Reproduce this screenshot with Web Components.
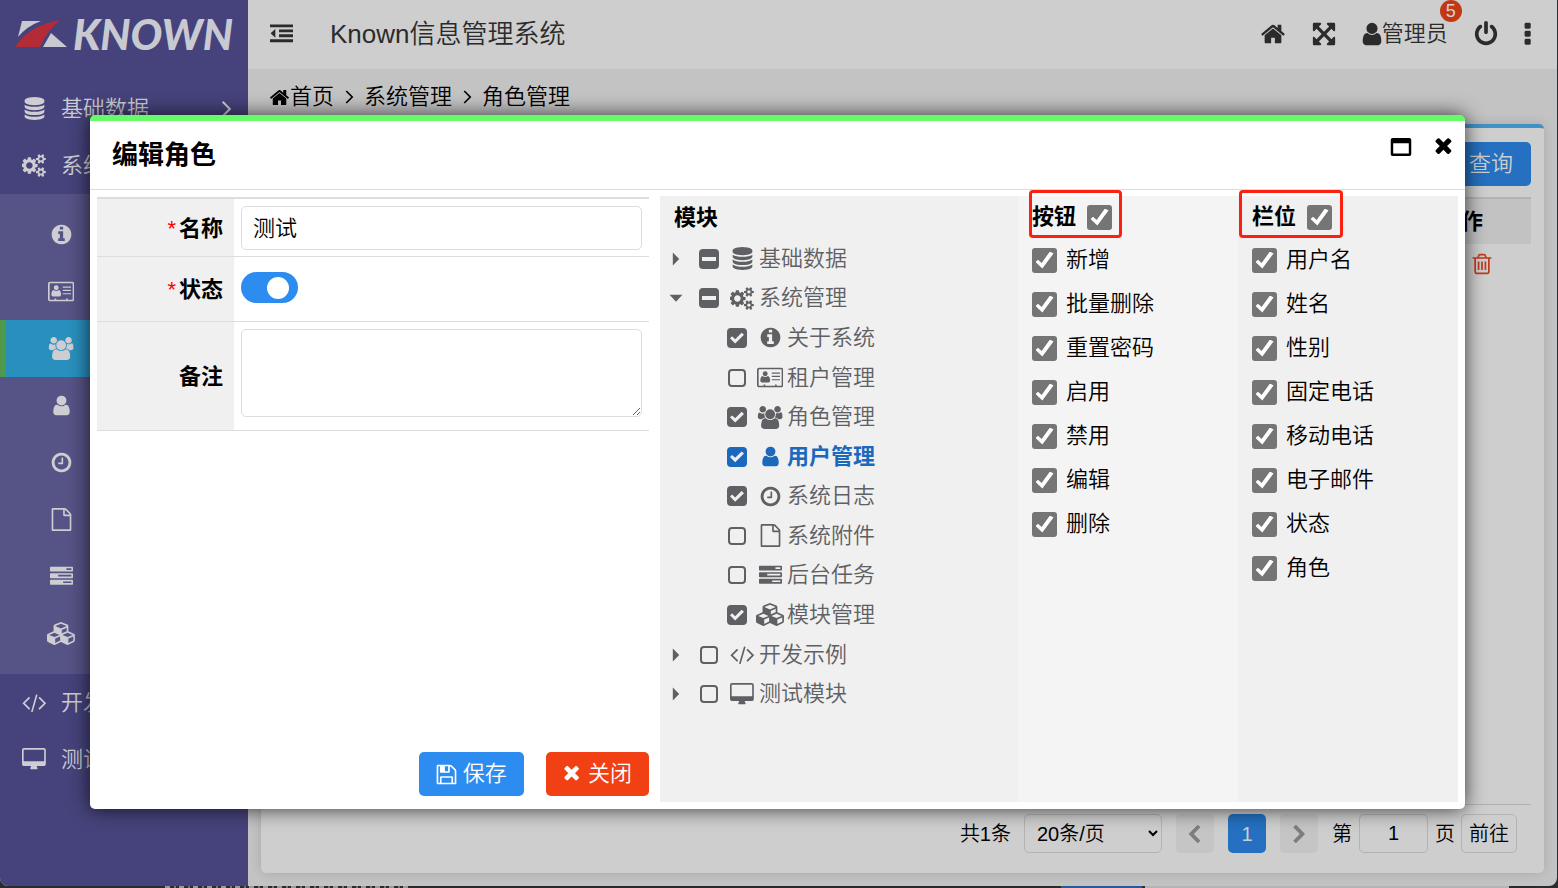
<!DOCTYPE html>
<html lang="zh-CN">
<head>
<meta charset="utf-8">
<title>Known信息管理系统</title>
<style>
html,body{margin:0;height:100%}
body{background:#2a2b2c;font:350 22px/32px "Liberation Sans","Noto Sans CJK SC",sans-serif;color:#000;overflow:hidden}
</style>
</head>
<body>
<k-app>
  <k-sidebar slot="side"></k-sidebar>
  <k-header slot="top"></k-header>
  <k-breadcrumb slot="path"></k-breadcrumb>
  <k-list slot="page"></k-list>
  <k-dialog slot="dialog" heading="编辑角色">
    <k-role-form slot="form"></k-role-form>
    <k-permissions slot="side"></k-permissions>
  </k-dialog>
</k-app>
<script>
const circle='q0 209-103 385.5t-279.5 279.5-385.5 103-385.5-103-279.5-279.5-103-385.5 103-385.5 279.5-279.5 385.5-103 385.5 103 279.5 279.5 103 385.5z';
const smallGear='v140q0 16-149 31-12 27-30 52 51 113 51 138 0 4-4 7-122 71-124 71-8 0-46-47t-52-68q-20 2-30 2t-30-2q-14 21-52 68t-46 47q-2 0-124-71-4-3-4-7 0-25 51-138-18-25-30-52-149-15-149-31v-140q0-16 149-31 13-29 30-52-51-113-51-138 0-4 4-7 4-2 35-20t59-34 30-16q8 0 46 46.5t52 67.5q20-2 30-2t30 2q51-71 92-112l6-2q4 0 124 70 4 3 4 7 0 25-51 138 17 23 30 52 149 15 149 31z';
const disc='v170q0 69-103 128t-280 93.5-385 34.5-385-34.5-280-93.5-103-128v-170q119 84 325 127t443 43z';
const bar='v256q0 26-19 45t-45 19h-1664q-26 0-45-19t-19-45v-256q0-26 19-45t45-19h1664q26 0 45 19t19 45z';
const slat='v576q0 14-9 23t-23 9h-64q-14 0-23-9t-9-23v-576q0-14 9-23t23-9h64q14 0 23 9t9 23z';
const p=d=>`<path d="${d}"/>`;
const ICONS={
home:[1792,p('M1472 992v480q0 26-19 45t-45 19h-384v-384h-256v384h-384q-26 0-45-19t-19-45v-480q0-1 .5-3t.5-3l575-474 575 474q1 2 1 6zm223-69l-62 74q-8 9-21 11h-3q-13 0-21-7l-692-577-692 577q-12 8-24 7-13-2-21-11l-62-74q-8-10-7-23.5t11-21.5l719-599q32-26 76-26t76 26l244 204v-195q0-14 9-23t23-9h192q14 0 23 9t9 23v408l219 182q10 8 11 21.5t-7 23.5z')],
database:[1792,p('M896 768q237 0 443-43t325-127'+disc)+p('M896 1536q237 0 443-43t325-127'+disc)+p('M896 1152q237 0 443-43t325-127'+disc)+p('M896 0q208 0 385 34.5t280 93.5 103 128v128q0 69-103 128t-280 93.5-385 34.5-385-34.5-280-93.5-103-128v-128q0-69 103-128t280-93.5 385-34.5z')],
cogs:[1856,p('M832 896q0-106-75-181t-181-75-181 75-75 181 75 181 181 75 181-75 75-181zm768 512q0-52-38-90t-90-38-90 38-38 90q0 53 37.5 90.5t90.5 37.5 90.5-37.5 37.5-90.5zm0-1024q0-52-38-90t-90-38-90 38-38 90q0 53 37.5 90.5t90.5 37.5 90.5-37.5 37.5-90.5zm-384 421v185q0 10-7 19.5t-16 10.5l-155 24q-11 35-32 76 34 48 90 115 7 11 7 20 0 12-7 19-23 30-82.5 89.5t-78.5 59.5q-11 0-21-7l-115-90q-37 19-77 31-11 108-23 155-7 24-30 24h-186q-11 0-20-7.5t-10-17.5l-23-153q-34-10-75-31l-118 89q-7 7-20 7-11 0-21-8-144-133-144-160 0-9 7-19 10-14 41-53t47-61q-23-44-35-82l-152-24q-10-1-17-9.5t-7-19.5v-185q0-10 7-19.5t16-10.5l155-24q11-35 32-76-34-48-90-115-7-11-7-20 0-12 7-20 22-30 82-89t79-59q11 0 21 7l115 90q34-18 77-32 11-108 23-154 7-24 30-24h186q11 0 20 7.5t10 17.5l23 153q34 10 75 31l118-89q8-7 20-7 11 0 21 8 144 133 144 160 0 8-7 19-12 16-42 54t-45 60q23 48 34 82l152 23q10 2 17 10.5t7 19.5zm640 533'+smallGear+'m0-1024'+smallGear)],
info:[1792,p('M1152 1376v-160q0-14-9-23t-23-9h-96v-512q0-14-9-23t-23-9h-320q-14 0-23 9t-9 23v160q0 14 9 23t23 9h96v320h-96q-14 0-23 9t-9 23v160q0 14 9 23t23 9h448q14 0 23-9t9-23zm-128-896v-160q0-14-9-23t-23-9h-192q-14 0-23 9t-9 23v160q0 14 9 23t23 9h192q14 0 23-9t9-23zm640 416'+circle)],
card:[2048,'<path fill-rule="evenodd" d="M160 128h1728q66 0 113 47t47 113v1216q0 66-47 113t-113 47h-1728q-66 0-113-47t-47-113v-1216q0-66 47-113t113-47zm0 128q-32 0-32 32v1216q0 32 32 32h352v-96h128v96h768v-96h128v96h352q32 0 32-32v-1216q0-32-32-32z"/>'+p('M1024 1134q0 60-35 101t-88 41h-522q-52 0-87-41t-36-101q0-220 95-316 30-32 86-32 85 78 203 78t203-78q56 0 87 32 94 96 94 316zM832 608a192 192 0 1 1-384 0a192 192 0 1 1 384 0zM1152 512h640v96h-640zM1152 768h640v96h-640zM1152 1024h640v96h-640z')],
users:[2048,p('M657 896q-162 5-265 128h-134q-82 0-138-40.5t-56-118.5q0-353 124-353 6 0 43.5 21t97.5 42.5 119 21.5q67 0 133-23-5 37-5 66 0 159 81 288zm1071 637q0 120-73 189.5t-194 69.5h-874q-121 0-194-69.5t-73-189.5q0-53 3.5-103.5t14-109 26.5-108.5 43-97.5 62-81 85.5-53.5 111.5-20q10 0 43 21.5t73 48 107 48 135 21.5 135-21.5 107-48 73-48 43-21.5q61 0 111.5 20t85.5 53.5 62 81 43 97.5 26.5 108.5 14 109 3.5 103.5zm-1024-1277q0 106-75 181t-181 75-181-75-75-181 75-181 181-75 181 75 75 181zm704 384q0 159-112.5 271.5t-271.5 112.5-271.5-112.5-112.5-271.5 112.5-271.5 271.5-112.5 271.5 112.5 112.5 271.5zm576 225q0 78-56 118.5t-138 40.5h-134q-103-123-265-128 81-129 81-288 0-29-5-66 66 23 133 23 59 0 119-21.5t97.5-42.5 43.5-21q124 0 124 353zm-128-609q0 106-75 181t-181 75-181-75-75-181 75-181 181-75 181 75 75 181z')],
user:[1792,p('M1536 1399q0 109-62.5 187t-150.5 78h-854q-88 0-150.5-78t-62.5-187q0-85 8.5-160.5t31.5-152 58.5-131 94-89 134.5-34.5q131 128 313 128t313-128q76 0 134.5 34.5t94 89 58.5 131 31.5 152 8.5 160.5zm-256-887q0 159-112.5 271.5t-271.5 112.5-271.5-112.5-112.5-271.5 112.5-271.5 271.5-112.5 271.5 112.5 112.5 271.5z')],
clock:[1792,p('M1024 544v448q0 14-9 23t-23 9h-320q-14 0-23-9t-9-23v-64q0-14 9-23t23-9h224v-352q0-14 9-23t23-9h64q14 0 23 9t9 23zm416 352q0-148-73-273t-198-198-273-73-273 73-198 198-73 273 73 273 198 198 273 73 273-73 198-198 73-273zm224 0'+circle)],
file:[1792,p('M1596 380q28 28 48 76t20 88v1152q0 40-28 68t-68 28h-1344q-40 0-68-28t-28-68v-1600q0-40 28-68t68-28h896q40 0 88 20t76 48zm-444-244v376h376q-10-29-22-41l-313-313q-12-12-41-22zm384 1528v-1024h-416q-40 0-68-28t-28-68v-416h-768v1536h1280z')],
tasks:[1792,p('M1024 1408h640v-128h-640v128zm-384-512h1024v-128h-1024v128zm640-512h384v-128h-384v128zm512 832'+bar+'m0-512'+bar+'m0-512'+bar)],
cubes:[2176,p('M640 1632l384-192v-314l-384 164v342zm-64-454l404-173-404-173-404 173zm1088 454l384-192v-314l-384 164v342zm-64-454l404-173-404-173-404 173zm-448-293l384-165v-266l-384 164v267zm-64-379l441-189-441-189-441 189zm1088 518v416q0 36-19 67t-52 47l-448 224q-25 14-57 14t-57-14l-448-224q-5-2-7-4-2 2-7 4l-448 224q-25 14-57 14t-57-14l-448-224q-33-16-52-47t-19-67v-416q0-38 21.5-70t56.5-48l434-186v-400q0-38 21.5-70t56.5-48l448-192q23-10 50-10t50 10l448 192q35 16 56.5 48t21.5 70v400l434 186q36 16 57 48t21 70z')],
code:[1920,p('M617 1399l-50 50q-10 10-23 10t-23-10l-466-466q-10-10-10-23t10-23l466-466q10-10 23-10t23 10l50 50q10 10 10 23t-10 23l-393 393 393 393q10 10 10 23t-10 23zm591-1067l-373 1291q-4 13-15.5 19.5t-23.5 2.5l-62-17q-13-4-19.5-15.5t-2.5-24.5l373-1291q4-13 15.5-19.5t23.5-2.5l62 17q13 4 19.5 15.5t2.5 24.5zm657 651l-466 466q-10 10-23 10t-23-10l-50-50q-10-10-10-23t10-23l393-393-393-393q-10-10-10-23t10-23l50-50q10-10 23-10t23 10l466 466q10 10 10 23t-10 23z')],
desktop:[1856,p('M1728 992v-832q0-13-9.5-22.5t-22.5-9.5h-1536q-13 0-22.5 9.5t-9.5 22.5v832q0 13 9.5 22.5t22.5 9.5h1536q13 0 22.5-9.5t9.5-22.5zm128-832v1088q0 66-47 113t-113 47h-544q0 37 16 77.5t32 71 16 43.5q0 26-19 45t-45 19h-448q-26 0-45-19t-19-45q0-14 16-44t32-70 16-78h-544q-66 0-113-47t-47-113v-1088q0-66 47-113t113-47h1536q66 0 113 47t47 113z')],
outdent:[1792,p('M0 192h1792v224h-1792zM704 576h1088v224h-1088zM704 960h1088v224h-1088zM0 1344h1792v224h-1792zM416 540v680l-370-340z')],
expand:[1792,p('M1411 541l-355 355 355 355 144-144q29-31 70-14 39 17 39 59v448q0 26-19 45t-45 19h-448q-42 0-59-40-17-39 14-69l144-144-355-355-355 355 144 144q31 30 14 69-17 40-59 40h-448q-26 0-45-19t-19-45v-448q0-42 40-59 39-17 69 14l144 144 355-355-355-355-144 144q-19 19-45 19-12 0-24-5-40-17-40-59v-448q0-26 19-45t45-19h448q42 0 59 40 17 39-14 69l-144 144 355 355 355-355-144-144q-31-30-14-69 17-40 59-40h448q26 0 45 19t19 45v448q0 42-39 59-13 5-25 5-26 0-45-19z')],
power:[1792,p('M1664 896q0 156-61 298t-164 245-245 164-298 61-298-61-245-164-164-245-61-298q0-182 80.5-343t226.5-270q43-32 95.5-25t83.5 50q32 42 24.5 94.5t-49.5 84.5q-98 74-151.5 181t-53.5 228q0 104 40.5 198.5t109.5 163.5 163.5 109.5 198.5 40.5 198.5-40.5 163.5-109.5 109.5-163.5 40.5-198.5q0-121-53.5-228t-151.5-181q-42-32-49.5-84.5t24.5-94.5q31-43 84-50t95 25q146 109 226.5 270t80.5 343zm-640-768v640q0 52-38 90t-90 38-90-38-38-90v-640q0-52 38-90t90-38 90 38 38 90z')],
dots:[640,'<rect x="110" y="128" width="420" height="400" rx="90"/><rect x="110" y="680" width="420" height="400" rx="90"/><rect x="110" y="1232" width="420" height="400" rx="90"/>'],
trash:[1792,p('M704 736'+slat+'m256 0'+slat+'m256 0'+slat+'m128 724v-948h-896v948q0 22 7 40.5t14.5 27 10.5 8.5h832q3 0 10.5-8.5t14.5-27 7-40.5zm-672-1076h448l-48-117q-7-9-17-11h-317q-10 2-17 11zm928 32v64q0 14-9 23t-23 9h-96v948q0 83-47 143.5t-113 60.5h-832q-66 0-113-58.5t-47-141.5v-952h-96q-14 0-23-9t-9-23v-64q0-14 9-23t23-9h309l70-167q15-37 54-63t79-26h320q40 0 79 26t54 63l70 167h309q14 0 23 9t9 23z')],
close:[1408,'<g transform="translate(-192 -132)">'+p('M1490 1322q0 40-28 68l-136 136q-28 28-68 28t-68-28l-294-294-294 294q-28 28-68 28t-68-28l-136-136q-28-28-28-68t28-68l294-294-294-294q-28-28-28-68t28-68l136-136q28-28 68-28t68 28l294 294 294-294q28-28 68-28t68 28l136 136q28 28 28 68t-28 68l-294 294 294 294q28 28 28 68z')+'</g>'],
save:[1792,p('M512 1536h768v-384h-768v384zm896 0h128v-896q0-14-10-38.5t-20-34.5l-281-281q-10-10-34-20t-39-10v416q0 40-28 68t-68 28h-576q-40 0-68-28t-28-68v-416h-128v1280h128v-416q0-40 28-68t68-28h832q40 0 68 28t28 68v416zm-384-928v-320q0-13-9.5-22.5t-22.5-9.5h-192q-13 0-22.5 9.5t-9.5 22.5v320q0 13 9.5 22.5t22.5 9.5h192q13 0 22.5-9.5t9.5-22.5zm640 32v928q0 40-28 68t-68 28h-1344q-40 0-68-28t-28-68v-1344q0-40 28-68t68-28h928q40 0 88 20t76 48l280 280q28 28 48 76t20 88z')],
maximize:[1792,'<path fill-rule="evenodd" d="M220 160h1352q160 0 160 140v1192q0 140-140 140h-1392q-140 0-140-140v-1192q0-140 160-140zM260 600v820h1272v-820z"/>'],
angle:[900,'<path d="M200 360l536 536-536 536" fill="none" stroke="currentColor" stroke-width="150"/>'],
left:[1400,'<path d="M1080 180l-700 716 700 716" fill="none" stroke="currentColor" stroke-width="340"/>'],
right:[1400,'<path d="M320 180l700 716-700 716" fill="none" stroke="currentColor" stroke-width="340"/>'],
caretRight:[1000,p('M180 256v1280l640-640z')],
caretDown:[1792,p('M256 580h1280l-640 680z')]
};
function define(name,css,html,after){
  customElements.define(name,class extends HTMLElement{
    constructor(){super();this.attachShadow({mode:'open'})}
    connectedCallback(){
      this.shadowRoot.innerHTML=`<style>*,:host{box-sizing:border-box}${css}</style>`+(typeof html==='function'?html(this):html);
      if(after)after(this.shadowRoot,this);
    }
  });
}
define('k-icon',':host{display:inline-flex;justify-content:center;align-items:center;flex:none}svg{display:block;height:1em;fill:currentColor}',
  el=>{const [w,body]=ICONS[el.getAttribute('name')];return `<svg viewBox="0 0 ${w} 1792" aria-hidden="true">${body}</svg>`});

define('k-app',`:host{display:flex;flex-direction:column;height:100vh;position:relative}
.window{flex:1;min-height:0;margin-right:1px;display:flex;border-radius:0 0 8px 8px;overflow:hidden;background:#c3c3c3}
main{flex:1;min-width:0;display:flex;flex-direction:column}
.under{height:2px;flex:none;display:grid;grid-template-columns:1061fr 81fr 367fr 49fr}
.a{margin:0 650px 0 165px;background:repeating-linear-gradient(90deg,#9a9a9a 0 5px,#2a2b2c 5px 9px,#777 9px 11px,#2a2b2c 11px 14px)}
.b{background:#285a9c}.c{background:#b4b4b8;margin-left:3px}`,
`<div class="window"><slot name="side"></slot><main><slot name="top"></slot><slot name="path"></slot><slot name="page"></slot></main></div>
<div class="under"><i class="a"></i><i class="b"></i><i class="c"></i><i></i></div><slot name="dialog"></slot>`);

define('k-nav-item',`:host{display:block}a{display:flex;align-items:center;height:57px;color:#cdcdd2;text-decoration:none;padding-left:18px}
.main{width:32px;font-size:23px}.sub{width:32px;font-size:23px;margin-left:27px}
span{margin-left:11px;flex:1;white-space:nowrap}.arrow{font-size:24px;margin-right:16px}
:host([active]) a{background:#2990be;border-left:6px solid #4e994b;padding-left:12px}`,
el=>{const l=el.getAttribute('label'),i=el.getAttribute('icon');return el.hasAttribute('sub')
 ?`<a href="#" aria-label="${l}"><k-icon class="sub" name="${i}"></k-icon></a>`
 :`<a href="#"><k-icon class="main" name="${i}"></k-icon><span>${l}</span>${el.hasAttribute('more')?'<k-icon class="arrow" name="angle"></k-icon>':''}</a>`});

define('k-sidebar',`:host{display:block;width:248px;flex:none;background:#46437c}
.logo{height:80px;display:flex;align-items:flex-start;padding:10px 0 0 15px;gap:6px;color:#c9c9d2;font:italic 900 42px/48px Lato,sans-serif}
.logo svg{width:52px;height:28px;margin-top:10px}
.group{background:#565386;padding:12px 0}`,
`<div class="logo"><svg viewBox="0 0 52 28" aria-hidden="true"><path fill="#c9c9d2" d="M7 1h19Q12 6 3 17zM36 13l16 14H28z"/><path fill="#b22b36" d="M46 0Q34 7 25 27H0Q14 5 46 0z"/></svg><span>KNOWN</span></div>
<nav><k-nav-item icon="database" label="基础数据" more></k-nav-item><k-nav-item icon="cogs" label="系统管理"></k-nav-item>
<div class="group">${[['info','关于系统'],['card','租户管理'],['users','角色管理'],['user','用户管理'],['clock','系统日志'],['file','系统附件'],['tasks','后台任务'],['cubes','模块管理']].map(([i,l])=>`<k-nav-item sub icon="${i}" label="${l}" ${i==='users'?'active':''}></k-nav-item>`).join('')}</div>
<k-nav-item icon="code" label="开发示例"></k-nav-item><k-nav-item icon="desktop" label="测试模块"></k-nav-item></nav>`);

define('k-header',`:host{display:flex;align-items:center;height:69px;flex:none;background:#cecece;color:#2b2b2b;padding:0 25px 2px 22px}
button{all:unset;display:flex;align-items:center;position:relative}
h1{font-size:26px;font-weight:inherit;line-height:36px;margin:0 auto 0 37px}
k-icon{font-size:26px}.toggle k-icon{font-size:23px}.tools{display:flex;align-items:center}
.home{margin-right:25px}.full{margin-right:22px}.who{margin-right:25px}.who k-icon{margin-right:-3px}.power{margin-right:24px}
.badge{position:absolute;right:-14px;top:-18px;width:22px;height:22px;border-radius:50%;background:#c23814;color:#d8d0cc;font-size:18px;line-height:22px;text-align:center}`,
`<button class="toggle" aria-label="收起菜单"><k-icon name="outdent"></k-icon></button><h1>Known信息管理系统</h1>
<div class="tools"><button class="home" aria-label="首页"><k-icon name="home"></k-icon></button><button class="full" aria-label="全屏"><k-icon name="expand"></k-icon></button>
<button class="who"><k-icon name="user"></k-icon>管理员<span class="badge">5</span></button><button class="power" aria-label="退出"><k-icon name="power"></k-icon></button><button aria-label="更多"><k-icon name="dots"></k-icon></button></div>`);

define('k-breadcrumb',`:host{display:block;height:55px;flex:none;padding:12px 21px}nav{display:flex;align-items:center;height:32px}
a{color:#000;text-decoration:none;display:flex;align-items:center}.home{font-size:21px}.sep{font-size:20px;width:30px}`,
`<nav><a href="#"><k-icon class="home" name="home"></k-icon>首页</a><k-icon class="sep" name="angle"></k-icon><a href="#">系统管理</a><k-icon class="sep" name="angle"></k-icon><a href="#">角色管理</a></nav>`);

define('k-pager',`:host{display:flex;justify-content:flex-end;align-items:center;border-top:1px solid #b0b0b0;padding:9px 14px 20px 0;font-size:20px;line-height:28px}
select,button,input{font:inherit;color:#000;height:39px;border:1px solid #b3b3b3;border-radius:5px;background:#cecece;padding:0}
select{width:138px;padding:0 8px;margin:0 14px 0 13px}.step{width:38px;border:0;background:#c5c5c5;color:#7d7d7d;display:grid;place-items:center;font-size:20px}
.now{width:38px;margin:0 14px;border:0;background:#2570c1;color:#cecece}
input{width:69px;text-align:center;margin:0 7px}label{display:flex;align-items:center;margin-left:14px}.go{width:56px;margin-left:6px}`,
`<span>共1条</span><select aria-label="每页条数"><option>20条/页</option></select><button class="step" aria-label="上一页"><k-icon name="left"></k-icon></button><button class="now">1</button><button class="step" aria-label="下一页"><k-icon name="right"></k-icon></button><label>第<input value="1">页</label><button class="go">前往</button>`);

define('k-list',`:host{flex:1;min-height:0;display:flex;flex-direction:column;margin:0 13px 13px;padding:14px 13px 0;background:#cecece;border-top:4px solid #4091c5;border-radius:5px;box-shadow:0 0 12px rgba(0,0,0,.14)}
.bar{display:flex;justify-content:flex-end;margin-bottom:11px}.bar button{font:inherit;height:44px;border:0;border-radius:5px;background:#2570c1;color:#cecece;padding:0 18px}
table{width:100%;border-collapse:collapse;border-top:2px solid #b2b2b8}th{background:#c2c2c2;height:46px;text-align:right;padding:0 48px 0 0}
td{text-align:right;padding:8px 37px 0 0}td button{all:unset;color:#c33a1b;font-size:24px}k-pager{margin-top:auto}`,
`<div class="bar"><button>查询</button></div><table><thead><tr><th scope="col">操作</th></tr></thead><tbody><tr><td><button aria-label="删除"><k-icon name="trash"></k-icon></button></td></tr></tbody></table><k-pager></k-pager>`);

define('k-dialog',`:host{position:absolute;top:115px;right:93px;bottom:79px;left:90px;display:flex;flex-direction:column;background:#fff;border-top:6px solid #66fb66;border-radius:5px;box-shadow:0 0 20px rgba(0,0,0,.75)}
header{display:flex;align-items:center;height:69px;flex:none;border-bottom:1px solid #ddd;padding:0 12px 0 22px}
h2{font-size:26px;line-height:36px;margin:0 auto 0 0}header button{all:unset;display:flex;margin-bottom:17px;font-size:22px}.x{margin-left:22px;font-size:24px}
.body{flex:1;min-height:0;display:grid;grid-template-columns:552fr 798fr;gap:11px;padding:6px 7px 7px}`,
el=>`<header><h2>${el.getAttribute('heading')}</h2><button aria-label="最大化"><k-icon name="maximize"></k-icon></button><button aria-label="关闭"><k-icon class="x" name="close"></k-icon></button></header>
<div class="body"><slot name="form"></slot><slot name="side"></slot></div>`);

define('k-field',`:host{display:grid;grid-template-columns:137px 1fr;border-bottom:1px solid #ddd}
label{background:#f0f0f0;font-weight:700;text-align:right;padding:2px 11px 0 0;display:flex;align-items:center;justify-content:flex-end;gap:3px}
b{color:#f00;font-weight:400}.cell{padding:7px 7px 6px;display:flex;align-items:center}
input,textarea{font:inherit;width:100%;height:44px;border:1px solid #ddd;border-radius:5px;padding:0 11px 4px;display:block}
textarea{height:88px;margin-bottom:7px;resize:vertical}
.switch{appearance:none;width:57px;height:31px;border:0;border-radius:16px;background:#2d8cf0;margin:8px 0 12px;display:grid;align-items:center;justify-content:end;padding:0 9px}
.switch::before{content:"";width:22px;height:22px;border-radius:50%;background:#fff}`,
el=>{const t=el.getAttribute('type');return `<label for="f"><span>${el.hasAttribute('required')?'<b>*</b> ':''}</span>${el.getAttribute('label')}</label><div class="cell">${t==='area'?'<textarea id="f"></textarea>':t==='switch'?'<input id="f" class="switch" type="checkbox" checked>':'<input id="f" value="测试">'}</div>`});

define('k-role-form',`:host{display:flex;flex-direction:column;padding-top:1px}.fields{border-top:2px solid #dcdce2}
.actions{margin-top:auto;display:flex;justify-content:flex-end;gap:22px;padding-bottom:6px}
button{font:inherit;height:44px;border:0;border-radius:5px;color:#fff;background:#2d8cf0;padding:0 17px 0 16px;display:flex;align-items:center;gap:5px}
button.no{background:#f04014;gap:8px;padding-left:17px}k-icon{font-size:23px}.no k-icon{font-size:22px}`,
`<div class="fields"><k-field label="名称" required></k-field><k-field label="状态" type="switch" required></k-field><k-field label="备注" type="area"></k-field></div>
<div class="actions"><button><k-icon name="save"></k-icon>保存</button><button class="no"><k-icon name="close"></k-icon>关闭</button></div>`);

const TREE=[[0,'-','database','基础数据','caretRight'],[0,'-','cogs','系统管理','caretDown'],[1,1,'info','关于系统'],[1,0,'card','租户管理'],[1,1,'users','角色管理'],[1,1,'user','用户管理'],[1,1,'clock','系统日志'],[1,0,'file','系统附件'],[1,0,'tasks','后台任务'],[1,1,'cubes','模块管理'],[0,0,'code','开发示例','caretRight'],[0,0,'desktop','测试模块','caretRight']];
define('k-tree',`:host{display:block;color:#5f6064}h3{font-size:22px;line-height:32px;margin:0;padding:6px 14px 5px;color:#000}
ul{list-style:none;margin:0;padding:0 0 0 8px;height:475px;display:flex;flex-direction:column}
li{flex:1;display:flex;align-items:center}.t{width:16px;margin-right:15px;font-size:18px;display:flex;justify-content:center}.deep{padding-left:28px}
label{display:flex;align-items:center}.i{width:34px;margin-left:6px;font-size:23px}
input{appearance:none;margin:0 1px;width:18px;height:18px;border:2px solid #5f6064;border-radius:4px;display:grid;place-items:center}
input:checked,input.part{width:20px;height:20px;margin:0;background:currentColor;border:0;color:#5f6064}
input:checked::before{content:"";width:14px;height:12px;background:#f0f0f0;clip-path:polygon(0 52%,15% 36%,37% 60%,83% 6%,100% 24%,37% 96%)}
input.part::before{content:"";width:14px;height:4px;background:#f0f0f0}
.on{color:#1b68bd;font-weight:700}.on input:checked{color:#1b68bd}`,
`<h3>模块</h3><ul>${TREE.map(([d,c,i,l,a])=>`<li class="${d?'deep':''} ${l==='用户管理'?'on':''}"><span class="t">${a?`<k-icon name="${a}"></k-icon>`:''}</span><label><input type="checkbox" ${c===1?'checked':c==='-'?'class="part"':''}><k-icon class="i" name="${i}"></k-icon>${l}</label></li>`).join('')}</ul>`,
root=>root.querySelectorAll('.part').forEach(e=>e.indeterminate=true));

define('k-checks',`:host{display:block;padding-left:14px;position:relative}
label{display:flex;align-items:center;height:44px;gap:9px}label.head{height:42px;font-weight:700;gap:11px}
input{appearance:none;margin:0;width:25px;height:25px;border-radius:3px;background:#757575;display:grid;place-items:center}
input::before{content:"";width:18px;height:17px;background:#fff;clip-path:polygon(0 62%,14% 48%,34% 67%,80% 0,100% 12%,38% 100%)}
.mark{position:absolute;top:-6px;left:var(--mark-left);width:var(--mark-width);height:48px;border:3px solid #fb2010;border-radius:4px;pointer-events:none}`,
el=>`<label class="head">${el.getAttribute('heading')}<input type="checkbox" checked></label>${el.getAttribute('items').split(' ').map(t=>`<label><input type="checkbox" checked>${t}</label>`).join('')}<div class="mark"></div>`);

define('k-permissions',`:host{display:grid;grid-template-columns:358fr 220fr 220fr;background:#f0f0f0}
.buttons{background:#f4f4f4;--mark-left:11px;--mark-width:93px}.columns{--mark-left:1px;--mark-width:104px}`,
`<k-tree></k-tree><k-checks class="buttons" heading="按钮" items="新增 批量删除 重置密码 启用 禁用 编辑 删除"></k-checks><k-checks class="columns" heading="栏位" items="用户名 姓名 性别 固定电话 移动电话 电子邮件 状态 角色"></k-checks>`);
</script>
</body>
</html>
